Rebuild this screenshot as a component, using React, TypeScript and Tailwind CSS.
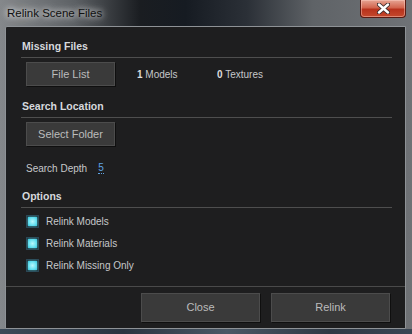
import React from "react";

const ui = { fontFamily: '"Liberation Sans", Arial, sans-serif' };

const SectionHeader = ({ label }: { label: string }) => (
  <>
    <div className="pl-[1px] h-[14px] leading-[14px] text-[10.5px] font-bold text-[#d6d9dd]">{label}</div>
    <div className="mt-[4px] h-px bg-[#4e4e4e]" />
  </>
);

const DarkButton = ({ label, className }: { label: string; className: string }) => (
  <div
    className={
      "flex items-center justify-center bg-[#3a3a3a] border border-[#4c4c4c] shadow-[1px_1px_0_#0f0f0f] text-[11px] text-[#bcbcbc] " +
      className
    }
  >
    {label}
  </div>
);

const Check = ({ label }: { label: string }) => (
  <div className="flex items-center h-[14px] ml-[5px]">
    <div className="w-[13px] h-[13px] border border-[#2b4552] p-[1px] bg-[#1b2a30]">
      <div className="w-full h-full bg-[radial-gradient(circle,#b8f7fc_0%,#6ee3f2_55%,#35c4dc_100%)] shadow-[0_0_2px_#55d8ec]" />
    </div>
    <span className="ml-[7px] text-[10px] text-[#c6c8ca]">{label}</span>
  </div>
);

export default function App() {
  return (
    <div
      style={ui}
      className="w-[412px] h-[334px] flex flex-col bg-[linear-gradient(90deg,#85888b_0%,#5d6165_18%,#1a1d21_34%,#161b22_45%,#2b3037_60%,#5f6367_76%,#6f7276_100%)]"
    >
      {/* title bar */}
      <div className="h-[26px] flex items-start justify-between">
        <span className="mt-[6px] ml-[7px] text-[11.5px] leading-[14px] text-[#101010] [text-shadow:0_0_6px_#ffffff,0_0_10px_rgba(255,255,255,0.7)]">
          Relink Scene Files
        </span>
        <div className="mr-[6px] w-[46px] h-[18px] rounded-b-[4px] border border-t-0 border-[#5a1a12] bg-[linear-gradient(180deg,#e6a493_0%,#d2654e_45%,#b8321c_55%,#c4482c_100%)] shadow-[inset_0_0_0_1px_rgba(255,210,200,0.45)] flex items-center justify-center">
          <svg width="13" height="11" viewBox="0 0 13 11">
            <path d="M2 1.5 L11 9.5 M11 1.5 L2 9.5" stroke="#3a2a2a" strokeWidth="4.2" strokeLinecap="round" />
            <path d="M2 1.5 L11 9.5 M11 1.5 L2 9.5" stroke="#ffffff" strokeWidth="2.4" strokeLinecap="round" />
          </svg>
        </div>
      </div>

      {/* client */}
      <div className="ml-[5px] mr-[6px] h-[303px] flex flex-col bg-[#1e1e1f] border border-[#8e9296] rounded-tl-[2px]">
        <div className="flex-1 flex flex-col pt-[12px] pl-[15px] pr-[13px]">
          <SectionHeader label="Missing Files" />
          <div className="mt-[4px] flex items-center">
            <DarkButton label="File List" className="ml-[5px] w-[89px] h-[24px]" />
            <div className="ml-[22px] w-[80px] text-[10px] text-[#c6c8ca]">
              <b className="text-[#dcdcdc]">1</b> Models
            </div>
            <div className="text-[10px] text-[#c6c8ca]">
              <b className="text-[#dcdcdc]">0</b> Textures
            </div>
          </div>

          <div className="mt-[13px]">
            <SectionHeader label="Search Location" />
          </div>
          <DarkButton label="Select Folder" className="mt-[4px] ml-[5px] w-[89px] h-[24px]" />

          <div className="mt-[15px] ml-[5px] h-[14px] flex items-center text-[10px] text-[#c6c8ca]">
            <span>Search Depth</span>
            <span className="ml-[11px] text-[#5ea4e4] border-b border-dotted border-[#5ea4e4] leading-[11px]">5</span>
          </div>

          <div className="mt-[14px]">
            <SectionHeader label="Options" />
          </div>
          <div className="mt-[6px] flex flex-col gap-[8px]">
            <Check label="Relink Models" />
            <Check label="Relink Materials" />
            <Check label="Relink Missing Only" />
          </div>
        </div>

        {/* footer */}
        <div className="border-t border-[#4a4a4a] h-[42px] flex items-start justify-end gap-[11px] pr-[15px] pt-[6px]">
          <DarkButton label="Close" className="w-[119px] h-[29px]" />
          <DarkButton label="Relink" className="w-[119px] h-[29px]" />
        </div>
      </div>
      <div className="flex-1 bg-[linear-gradient(90deg,#3c4a58,#2a3440_30%,#4a5866_55%,#2e3844_80%,#3a4654)]" />
    </div>
  );
}
